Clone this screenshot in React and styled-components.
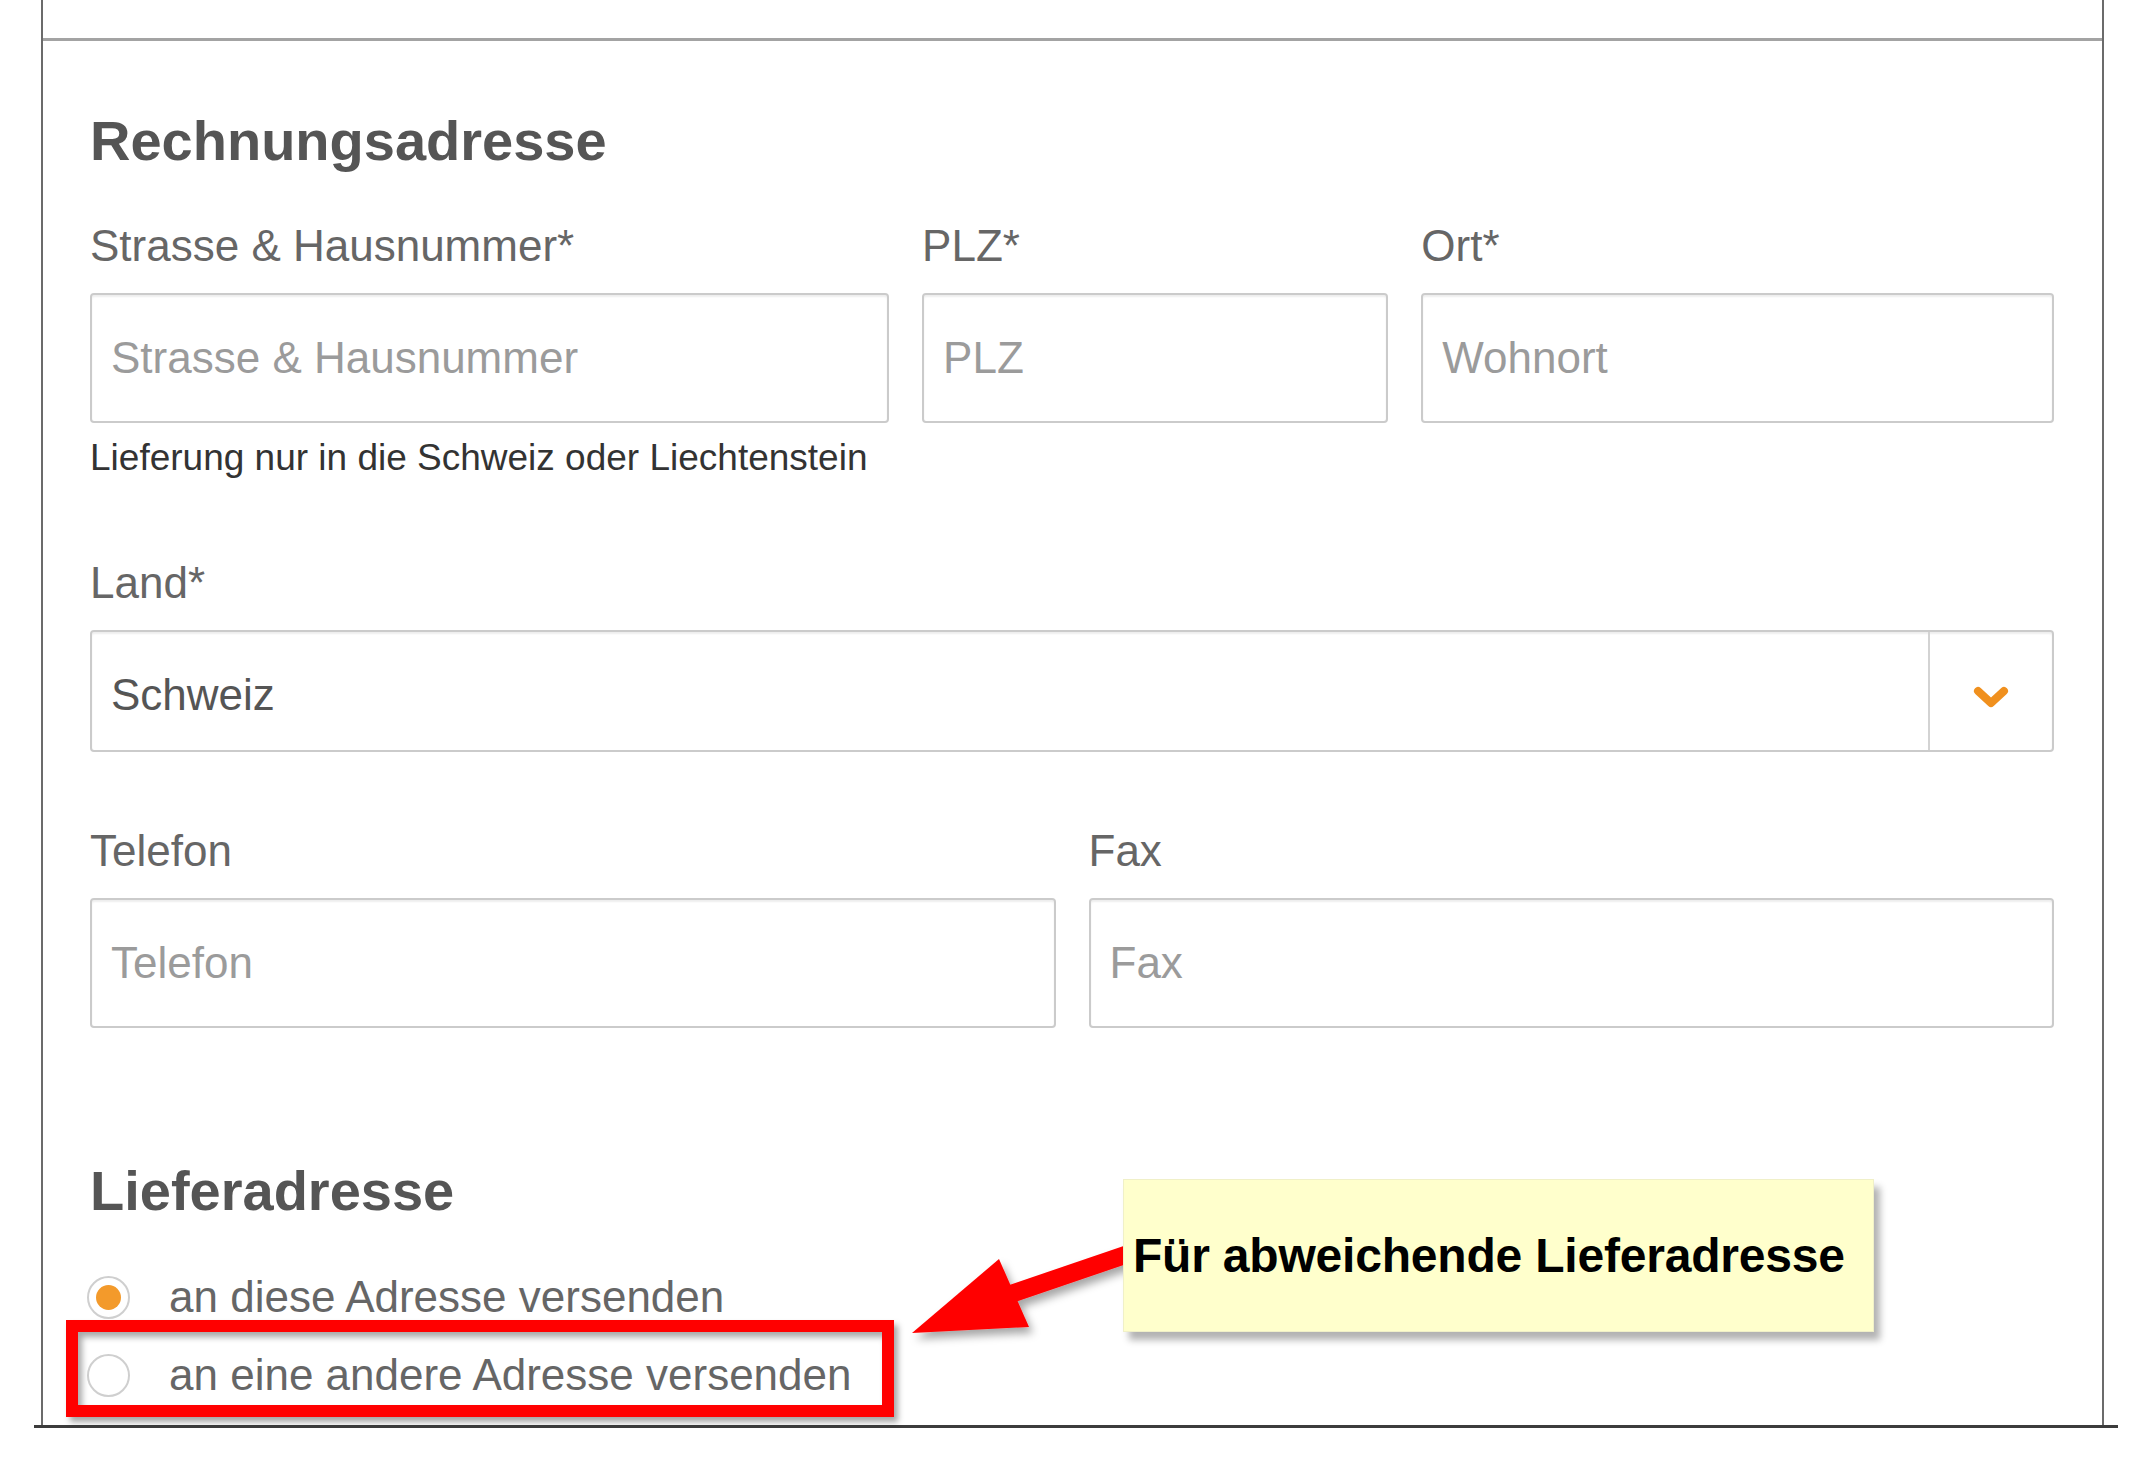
import React from 'react'
import styled, { createGlobalStyle } from 'styled-components'

const GlobalStyle = createGlobalStyle`
  body {
    margin: 0;
    background: #fff;
    font-family: "Liberation Sans", Arial, sans-serif;
  }
`;

const Page = styled.div`
  position: relative;
  width: 2152px;
  height: 1476px;
  overflow: hidden;
  background: #fff;
`;

const Panel = styled.div`
  margin-left: 41px;
  width: 2063px;
  box-sizing: border-box;
  border-left: 2px solid #6b6b6b;
  border-right: 2px solid #6b6b6b;
`;

const TopStrip = styled.div`
  height: 38px;
  border-bottom: 3px solid #a3a3a3;
`;

const Form = styled.form`
  padding: 0 48px 11px 47px;
`;

const Heading = styled.h2`
  margin: ${({ $top }) => $top}px 0 0;
  font-size: 56px;
  line-height: 68px;
  font-weight: bold;
  color: #555;
`;

const FieldGrid = styled.div`
  display: grid;
  grid-template-columns: repeat(12, 1fr);
  column-gap: 33px;
  margin-top: ${({ $top }) => $top}px;
`;

const Field = styled.div`
  grid-column: span ${({ $span }) => $span};
  min-width: 0;
`;

const Label = styled.label`
  display: block;
  margin-bottom: 21px;
  font-size: 44px;
  line-height: 52px;
  color: #666;
`;

const Input = styled.input`
  display: block;
  width: 100%;
  height: ${({ $h }) => $h || 130}px;
  box-sizing: border-box;
  padding: 0 19px;
  border: 2px solid #cbcbcb;
  border-radius: 4px;
  box-shadow: inset 0 2px 2px rgba(0, 0, 0, 0.07);
  font-family: "Liberation Sans", Arial, sans-serif;
  font-size: 44px;
  color: #555;
  outline: none;

  &::placeholder {
    color: #9b9b9b;
  }
`;

const Help = styled.p`
  margin: 13px 0 0;
  font-size: 37px;
  line-height: 44px;
  color: #333;
  white-space: nowrap;
`;

const SelectBox = styled.div`
  display: flex;
  height: 122px;
  box-sizing: border-box;
  border: 2px solid #cbcbcb;
  border-radius: 4px;
  box-shadow: inset 0 2px 2px rgba(0, 0, 0, 0.07);
`;

const SelectValue = styled.div`
  flex: 1;
  display: flex;
  align-items: center;
  padding: 8px 19px 0;
  font-size: 44px;
  color: #555;
`;

const SelectAddon = styled.div`
  width: 124px;
  display: flex;
  align-items: center;
  justify-content: center;
  padding-top: 14px;
  box-sizing: border-box;
  border-left: 2px solid #d3d3d3;
`;

const RadioList = styled.div`
  margin-top: 33px;
`;

const RadioRow = styled.label`
  display: flex;
  align-items: center;
  gap: 39px;
  height: 78px;
  font-size: 44px;
  color: #666;
`;

const RadioDot = styled.span`
  width: 43px;
  height: 43px;
  margin-left: -3px;
  box-sizing: border-box;
  border: 2px solid #cfcfcf;
  border-radius: 50%;
  display: flex;
  align-items: center;
  justify-content: center;
  background: #fff;

  &::after {
    content: '';
    width: 25px;
    height: 25px;
    border-radius: 50%;
    background: ${({ $checked }) => ($checked ? '#f39a2b' : 'transparent')};
  }
`;

const BottomRule = styled.div`
  margin-left: 34px;
  width: 2084px;
  height: 3px;
  background: #3c3c3c;
`;

const RedFrame = styled.div`
  position: absolute;
  left: 66px;
  top: 1320px;
  width: 828px;
  height: 97px;
  box-sizing: border-box;
  border: 12px solid #ff0000;
  box-shadow: 4px 5px 6px rgba(0, 0, 0, 0.35), inset 4px 5px 6px rgba(0, 0, 0, 0.35);
`;

const Callout = styled.div`
  position: absolute;
  left: 1123px;
  top: 1179px;
  width: 751px;
  height: 153px;
  box-sizing: border-box;
  padding-left: 9px;
  display: flex;
  align-items: center;
  background: #ffffcc;
  border: 1px solid #f0f0c8;
  box-shadow: 6px 8px 7px rgba(0, 0, 0, 0.3);
  font-size: 48px;
  font-weight: bold;
  letter-spacing: -0.2px;
  color: #000;
  white-space: nowrap;
`;

const ArrowSvg = styled.svg`
  position: absolute;
  left: 890px;
  top: 1225px;
  overflow: visible;
`;

const Chevron = () => (
  <svg width="40" height="28" viewBox="0 0 40 28">
    <polyline points="7,7 20,19 33,7" fill="none" stroke="#f0901e" strokeWidth="8" strokeLinecap="round" strokeLinejoin="round" />
  </svg>
);

const Arrow = () => (
  <ArrowSvg width="250" height="130" viewBox="890 1225 250 130">
    <defs>
      <filter id="arrowShadow" x="-20%" y="-20%" width="150%" height="160%">
        <feDropShadow dx="4" dy="6" stdDeviation="4" floodColor="#000" floodOpacity="0.35" />
      </filter>
    </defs>
    <g filter="url(#arrowShadow)" fill="#ff0000">
      <line x1="1005" y1="1296" x2="1128" y2="1254" stroke="#ff0000" strokeWidth="18" />
      <polygon points="912,1333 999,1259 1029,1327" />
    </g>
  </ArrowSvg>
);

export default function App() {
  return (
    <>
      <GlobalStyle />
      <Page>
        <Panel>
          <TopStrip />
          <Form onSubmit={(e) => e.preventDefault()}>
            <Heading $top={66}>Rechnungsadresse</Heading>

            <FieldGrid $top={45}>
              <Field $span={5}>
                <Label>Strasse &amp; Hausnummer*</Label>
                <Input placeholder="Strasse & Hausnummer" />
                <Help>Lieferung nur in die Schweiz oder Liechtenstein</Help>
              </Field>
              <Field $span={3}>
                <Label>PLZ*</Label>
                <Input placeholder="PLZ" />
              </Field>
              <Field $span={4}>
                <Label>Ort*</Label>
                <Input placeholder="Wohnort" />
              </Field>
            </FieldGrid>

            <FieldGrid $top={77}>
              <Field $span={12}>
                <Label>Land*</Label>
                <SelectBox>
                  <SelectValue>Schweiz</SelectValue>
                  <SelectAddon>
                    <Chevron />
                  </SelectAddon>
                </SelectBox>
              </Field>
            </FieldGrid>

            <FieldGrid $top={73}>
              <Field $span={6}>
                <Label>Telefon</Label>
                <Input placeholder="Telefon" />
              </Field>
              <Field $span={6}>
                <Label>Fax</Label>
                <Input placeholder="Fax" />
              </Field>
            </FieldGrid>

            <Heading $top={129}>Lieferadresse</Heading>
            <RadioList>
              <RadioRow>
                <RadioDot $checked />
                an diese Adresse versenden
              </RadioRow>
              <RadioRow>
                <RadioDot />
                an eine andere Adresse versenden
              </RadioRow>
            </RadioList>
          </Form>
        </Panel>
        <BottomRule />

        <Arrow />
        <RedFrame />
        <Callout>Für abweichende Lieferadresse</Callout>
      </Page>
    </>
  );
}
